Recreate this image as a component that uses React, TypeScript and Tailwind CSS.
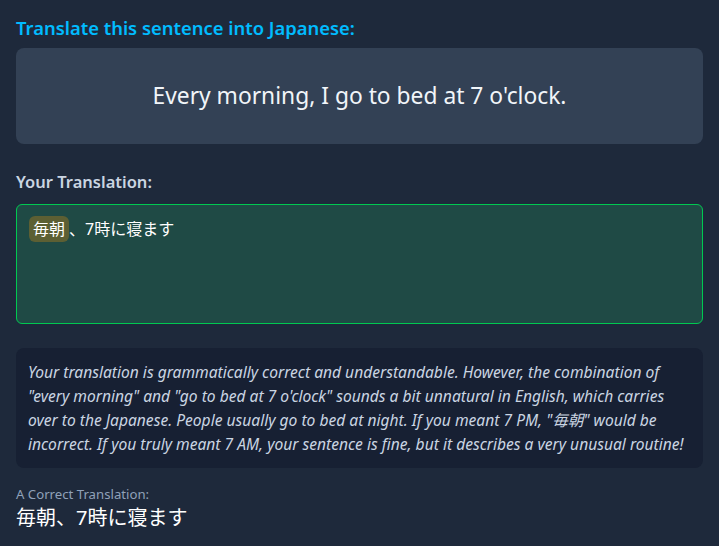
const font = { fontFamily: '"Noto Sans", "Noto Sans CJK JP", sans-serif' };

export default function App() {
  return (
    <div
      className="min-h-[546px] bg-[#1e293b] px-4 pt-[14px] pb-4 text-slate-100"
      style={font}
    >
      <h2 className="mb-1.5 text-[18.4px] leading-7 font-semibold text-sky-400">
        Translate this sentence into Japanese:
      </h2>
      <div className="rounded-lg bg-[#334155] p-8 text-center text-[22.8px] leading-8 text-slate-100">
        Every morning, I go to bed at 7 o'clock.
      </div>

      <label className="mt-6 mb-2 block text-[16.5px] leading-7 font-semibold text-slate-300">
        Your Translation:
      </label>
      <div className="h-[120px] rounded-md border border-green-500 bg-[#1f4a45] p-3 text-base leading-6 text-white">
        <span className="rounded-md bg-[#5c5f33] px-1 py-0.5">毎朝</span>
        、7時に寝ます
      </div>

      <div className="mt-6 rounded-lg bg-[#172033] p-3 text-[15.6px] leading-6 text-slate-300 italic">
        Your translation is grammatically correct and understandable. However, the combination of
        "every morning" and "go to bed at 7 o'clock" sounds a bit unnatural in English, which carries
        over to the Japanese. People usually go to bed at night. If you meant 7 PM, "毎朝" would be
        incorrect. If you truly meant 7 AM, your sentence is fine, but it describes a very unusual
        routine!
      </div>

      <div className="mt-4 text-[13.2px] leading-5 text-slate-400">A Correct Translation:</div>
      <div className="text-xl leading-7 text-white">毎朝、7時に寝ます</div>
    </div>
  );
}
